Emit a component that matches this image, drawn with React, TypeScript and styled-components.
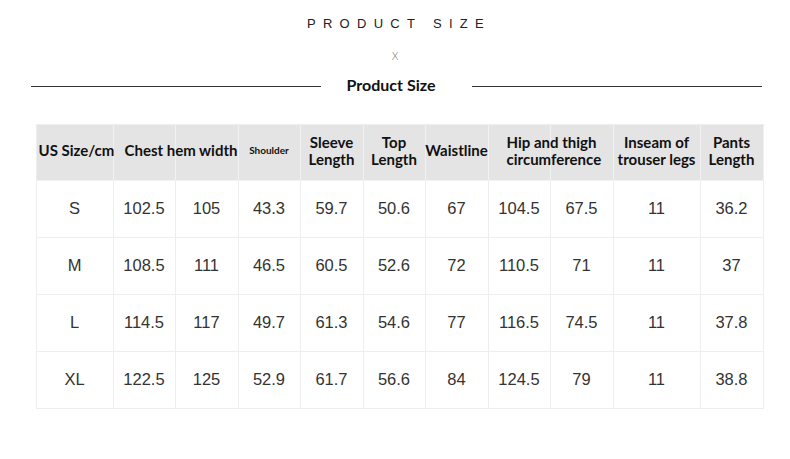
import React from "react";
import styled, { createGlobalStyle } from "styled-components";

const Global = createGlobalStyle`
  html, body { margin: 0; padding: 0; background: #fff; }
  body { width: 790px; height: 459px; overflow: hidden; }
`;

const Page = styled.div`
  width: 790px;
  height: 459px;
  display: flex;
  flex-direction: column;
  align-items: center;
  background: #fff;
`;

const Kicker = styled.div`
  margin-top: 16px;
  margin-left: 8px;
  font-family: "Liberation Sans", Arial, sans-serif;
  font-size: 13px;
  line-height: 15px;
  letter-spacing: 7.3px;
  color: #222;
`;

const Cross = styled.div`
  margin-top: 20px;
  font-family: "DejaVu Sans", sans-serif;
  font-weight: 300;
  font-size: 11px;
  line-height: 12px;
  color: #777;
`;

const TitleRow = styled.div`
  margin-top: 13px;
  width: 731px;
  margin-left: 2px;
  display: grid;
  grid-template-columns: 290px 1fr 290px;
  align-items: center;
`;

const Rule = styled.div`
  height: 1px;
  background: #333;
  margin-top: 3px;
`;

const Title = styled.div`
  text-align: center;
  font-family: Lato, "Open Sans", sans-serif;
  font-weight: 700;
  font-size: 16px;
  line-height: 18px;
  color: #111;
  padding-right: 10px;
`;

const Table = styled.div`
  margin-top: 30px;
  margin-left: 9px;
  display: grid;
  grid-template-columns: 77px 62px 63px 62px 63px 62px 63px 62px 63px 87px 63px;
  grid-template-rows: 56px repeat(4, 57px);
  border-top: 1px solid #eee;
  border-left: 1px solid #eee;
`;

const Head = styled.div<{ $split?: number; $pad?: number; $small?: boolean }>`
  grid-column: ${(p) => (p.$split ? "span 2" : "auto")};
  background: ${(p) =>
    p.$split
      ? `linear-gradient(to right, #e4e4e4 0, #e4e4e4 ${p.$split - 1}px, #f1f1f1 ${p.$split - 1}px, #f1f1f1 ${p.$split}px, #e4e4e4 ${p.$split}px)`
      : "#e4e4e4"};
  border-right: 1px solid #f1f1f1;
  border-bottom: 1px solid #f1f1f1;
  display: flex;
  align-items: center;
  justify-content: ${(p) => (p.$pad !== undefined ? "flex-start" : "center")};
  padding-left: ${(p) => p.$pad ?? 0}px;
  padding-bottom: 4px;
  text-align: ${(p) => (p.$pad !== undefined ? "left" : "center")};
  white-space: nowrap;
  font-family: Lato, "Open Sans", sans-serif;
  font-weight: 700;
  font-size: ${(p) => (p.$small ? "10px" : "15px")};
  line-height: 17px;
  color: #111;
`;

const Cell = styled.div`
  border-right: 1px solid #eee;
  border-bottom: 1px solid #eee;
  display: flex;
  align-items: center;
  justify-content: center;
  font-family: "Liberation Sans", Arial, sans-serif;
  font-size: 16.5px;
  color: #333;
  padding-bottom: 1px;
`;

const rows = [
  ["S", "102.5", "105", "43.3", "59.7", "50.6", "67", "104.5", "67.5", "11", "36.2"],
  ["M", "108.5", "111", "46.5", "60.5", "52.6", "72", "110.5", "71", "11", "37"],
  ["L", "114.5", "117", "49.7", "61.3", "54.6", "77", "116.5", "74.5", "11", "37.8"],
  ["XL", "122.5", "125", "52.9", "61.7", "56.6", "84", "124.5", "79", "11", "38.8"],
];

export default function App() {
  return (
    <Page>
      <Global />
      <Kicker>PRODUCT SIZE</Kicker>
      <Cross>X</Cross>
      <TitleRow>
        <Rule />
        <Title>Product Size</Title>
        <Rule />
      </TitleRow>
      <Table>
        <Head $pad={2}>US Size/cm</Head>
        <Head $split={62} $pad={11}>Chest hem width</Head>
        <Head $small>Shoulder</Head>
        <Head>Sleeve<br />Length</Head>
        <Head>Top<br />Length</Head>
        <Head>Waistline</Head>
        <Head $split={62} $pad={18}>Hip and thigh<br />circumference</Head>
        <Head>Inseam of<br />trouser legs</Head>
        <Head>Pants<br />Length</Head>
        {rows.map((r, i) =>
          r.map((v, j) => <Cell key={`${i}-${j}`}>{v}</Cell>)
        )}
      </Table>
    </Page>
  );
}
